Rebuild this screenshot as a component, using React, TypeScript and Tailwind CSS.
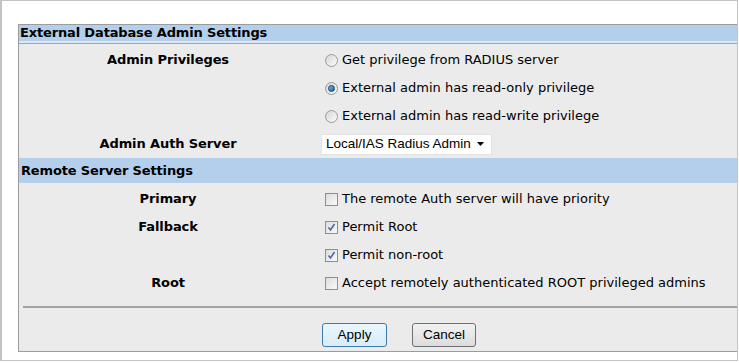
import React from 'react';

const Radio: React.FC<{ checked?: boolean }> = ({ checked }) => (
  <span className="ml-[4px] flex h-[13px] w-[13px] shrink-0 items-center justify-center rounded-full border border-[#9a9a9a] bg-gradient-to-br from-[#d6d6d6] to-[#fbfbfb]">
    {checked && (
      <span className="h-[7px] w-[7px] rounded-full border border-[#0d3f6e] bg-gradient-to-br from-[#7ec0f0] to-[#0b5ea8]" />
    )}
  </span>
);

const Checkbox: React.FC<{ checked?: boolean }> = ({ checked }) => (
  <span className="ml-[4px] flex h-[13px] w-[13px] shrink-0 items-center justify-center border border-[#8e8f8f] bg-gradient-to-br from-[#dcdcdc] to-[#fafafa]">
    {checked && (
      <svg width="9" height="9" viewBox="0 0 9 9">
        <path d="M1.5 4.5 L3.5 7 L7.5 1" fill="none" stroke="#5066a0" strokeWidth="1.6" />
      </svg>
    )}
  </span>
);

const Row: React.FC<{ label?: string; children: React.ReactNode }> = ({ label, children }) => (
  <div className="flex h-[28px] items-center">
    <div className="w-[298px] shrink-0 text-center font-bold tracking-[-0.1px]">{label}</div>
    <div className="flex items-center gap-[4px] pl-[4px]">{children}</div>
  </div>
);

const Header: React.FC<{ title: string; tall?: boolean }> = ({ title, tall }) => (
  <div className={tall ? '' : 'border-b border-[#a4a4a4]'}>
    <div
      className={
        tall
          ? 'flex h-[25px] items-center bg-[#b3cfeb] pl-[2px] font-bold tracking-[-0.15px]'
          : 'flex h-[18px] items-center border-b-2 border-[#dbe7f4] bg-[#b3cfeb] pl-[1px] font-bold tracking-[-0.15px]'
      }
    >
      {title}
    </div>
  </div>
);

export default function App() {
  return (
    <div className="h-[363px] w-[739px] bg-white">
      <div className="h-[361px] w-[738px] border border-l-2 border-[#c3c3c3] bg-white pt-[23px] pl-[16px] font-['DejaVu_Sans',sans-serif] text-[13px] leading-[16px] text-black">
        <div className="flex h-[328px] flex-col border-t border-b border-l border-[#9c9c9c] bg-[#ebebeb]">
          <Header title="External Database Admin Settings" />
          <div className="pt-[2px]">
            <Row label="Admin Privileges">
              <Radio />
              <span>Get privilege from RADIUS server</span>
            </Row>
            <Row>
              <Radio checked />
              <span>External admin has read-only privilege</span>
            </Row>
            <Row>
              <Radio />
              <span>External admin has read-write privilege</span>
            </Row>
            <Row label="Admin Auth Server">
              <div className="flex h-[21px] w-[171px] items-center justify-between border border-[#e2e2e2] bg-white pr-[6px] pl-[4px] font-['Liberation_Sans',sans-serif] text-[13.5px]">
                <span>Local/IAS Radius Admin</span>
                <svg width="8" height="4" viewBox="0 0 8 4">
                  <path d="M0 0 H7 L3.5 4 Z" fill="#000" />
                </svg>
              </div>
            </Row>
          </div>
          <Header title="Remote Server Settings" tall />
          <div className="pt-[2px]">
            <Row label="Primary">
              <Checkbox />
              <span>The remote Auth server will have priority</span>
            </Row>
            <Row label="Fallback">
              <Checkbox checked />
              <span>Permit Root</span>
            </Row>
            <Row>
              <Checkbox checked />
              <span>Permit non-root</span>
            </Row>
            <Row label="Root">
              <Checkbox />
              <span>Accept remotely authenticated ROOT privileged admins</span>
            </Row>
          </div>
          <div className="mt-[9px] ml-[4px] h-[2px] bg-[#a3a3a3]" />
          <div className="flex pt-[15px]">
            <div className="w-[303px] shrink-0" />
            <div className="flex gap-[25px] font-['Liberation_Sans',sans-serif] text-[13.5px]">
              <button className="h-[24px] w-[65px] rounded-[3px] border border-[#3d7bad] bg-gradient-to-b from-[#eaf6fd] to-[#d9ecf8] text-black">
                Apply
              </button>
              <button className="h-[24px] w-[64px] rounded-[3px] border border-[#707070] bg-gradient-to-b from-[#f2f2f2] to-[#dcdcdc] text-black">
                Cancel
              </button>
            </div>
          </div>
        </div>
      </div>
    </div>
  );
}
